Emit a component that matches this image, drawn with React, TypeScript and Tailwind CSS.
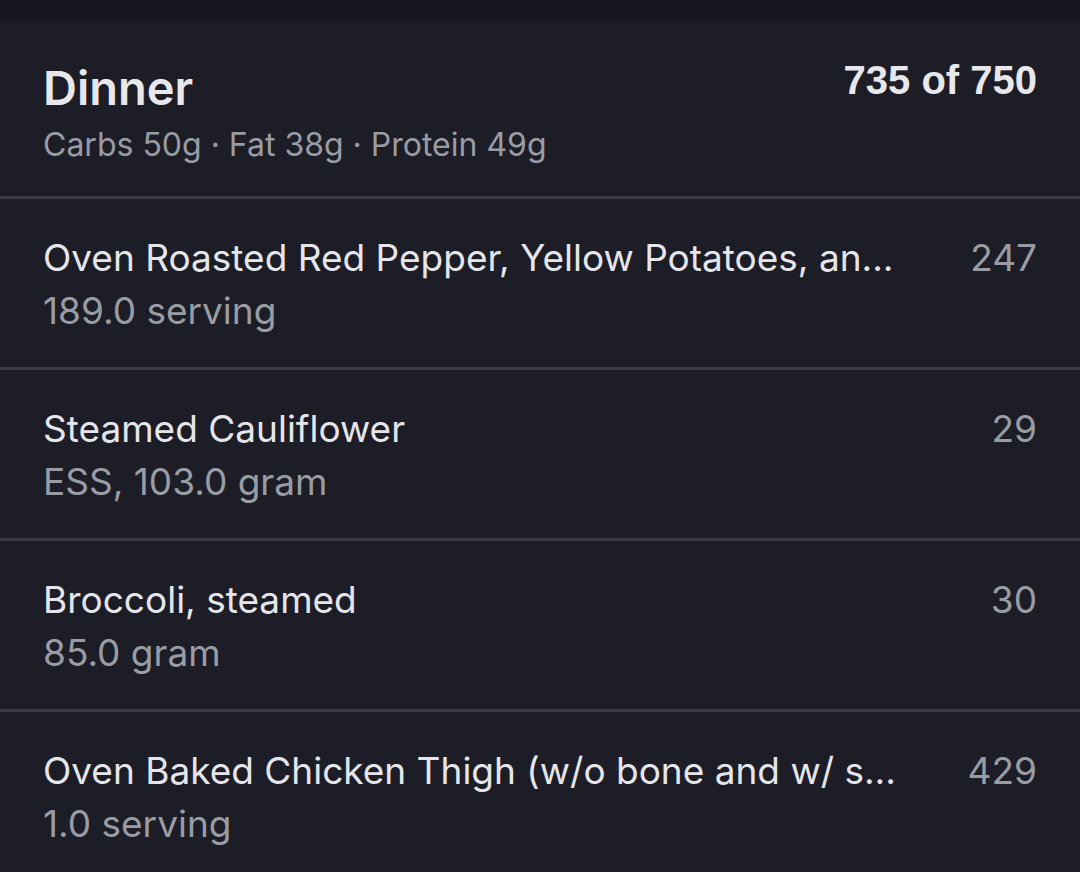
import React from 'react';

const items = [
  { name: 'Oven Roasted Red Pepper, Yellow Potatoes, an...', amount: '189.0 serving', cals: 247 },
  { name: 'Steamed Cauliflower', amount: 'ESS, 103.0 gram', cals: 29 },
  { name: 'Broccoli, steamed', amount: '85.0 gram', cals: 30 },
  { name: 'Oven Baked Chicken Thigh (w/o bone and w/ s...', amount: '1.0 serving', cals: 429 },
];

export default function App() {
  return (
    <div className="w-[1080px] h-[872px] overflow-hidden bg-[#1c1d27] font-['Inter',sans-serif]">
      <div className="h-[20px] bg-[#161720]" />

      {/* Header */}
      <div className="flex justify-between items-start px-[43px] pt-[40px] h-[179px] border-b-[3px] border-[#393b46]">
        <div>
          <h1 className="text-[47px] leading-[56px] font-semibold text-[#e8e8ec]">Dinner</h1>
          <p className="mt-[9px] text-[32px] leading-[40px] text-[#9a9ca4]">
            Carbs 50g · Fat 38g · Protein 49g
          </p>
        </div>
        <div className="font-['Liberation_Sans',sans-serif] font-bold text-[40px] leading-[44px] mt-[-2px] text-[#e8e8ec]">
          735 of 750
        </div>
      </div>

      {items.map((it) => (
        <div
          key={it.name}
          className="flex justify-between items-start gap-[40px] px-[43px] pt-[37px] h-[171px] border-b-[3px] border-[#393b46]"
        >
          <div className="min-w-0 flex-1">
            <div className="whitespace-nowrap text-[37px] leading-[44px] text-[#e6e6ea]">{it.name}</div>
            <div className="mt-[9px] text-[37px] leading-[44px] text-[#9a9ca4]">{it.amount}</div>
          </div>
          <div className="text-[37px] leading-[44px] text-[#9a9ca4]">{it.cals}</div>
        </div>
      ))}
    </div>
  );
}
